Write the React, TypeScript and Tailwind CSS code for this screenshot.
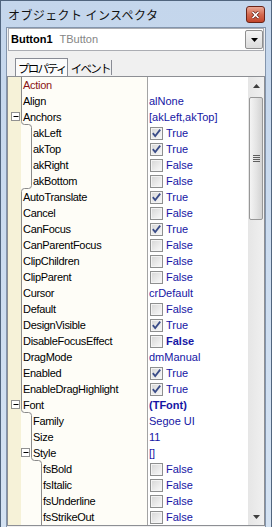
import React from "react";

type Row = {
  name: string;
  level: number;
  value?: string;
  check?: boolean;
  bold?: boolean;
  expand?: boolean;
  link?: boolean;
};

const rows: Row[] = [
  { name: "Action", level: 0, value: "", link: true },
  { name: "Align", level: 0, value: "alNone" },
  { name: "Anchors", level: 0, value: "[akLeft,akTop]", expand: true },
  { name: "akLeft", level: 1, check: true },
  { name: "akTop", level: 1, check: true },
  { name: "akRight", level: 1, check: false },
  { name: "akBottom", level: 1, check: false },
  { name: "AutoTranslate", level: 0, check: true },
  { name: "Cancel", level: 0, check: false },
  { name: "CanFocus", level: 0, check: true },
  { name: "CanParentFocus", level: 0, check: false },
  { name: "ClipChildren", level: 0, check: false },
  { name: "ClipParent", level: 0, check: false },
  { name: "Cursor", level: 0, value: "crDefault" },
  { name: "Default", level: 0, check: false },
  { name: "DesignVisible", level: 0, check: true },
  { name: "DisableFocusEffect", level: 0, check: false, bold: true },
  { name: "DragMode", level: 0, value: "dmManual" },
  { name: "Enabled", level: 0, check: true },
  { name: "EnableDragHighlight", level: 0, check: true },
  { name: "Font", level: 0, value: "(TFont)", bold: true, expand: true },
  { name: "Family", level: 1, value: "Segoe UI" },
  { name: "Size", level: 1, value: "11" },
  { name: "Style", level: 1, value: "[]", expand: true },
  { name: "fsBold", level: 2, check: false },
  { name: "fsItalic", level: 2, check: false },
  { name: "fsUnderline", level: 2, check: false },
  { name: "fsStrikeOut", level: 2, check: false },
];

const ROW_H = 16;
const lineX = (l: number) => 13.5 + l * 10;

// one path for the whole tree guide, stepping right/left where the level changes
const treePath = () => {
  let d = `M${lineX(rows[0].level)} 0`;
  rows.forEach((r, i) => {
    const next = rows[i + 1];
    if (next && next.level !== r.level) {
      const y = (i + 1) * ROW_H - 0.5;
      const a = lineX(r.level);
      const b = lineX(next.level);
      const s = b > a ? 1 : -1;
      d += ` V${y - 3} Q${a} ${y} ${a + s * 3} ${y} H${b - s * 3} Q${b} ${y} ${b} ${y + 3}`;
    }
  });
  return d + ` V${rows.length * ROW_H}`;
};

const CheckBox = ({ checked }: { checked: boolean }) => (
  <svg width="13" height="13" viewBox="0 0 13 13" className="shrink-0">
    <defs>
      <linearGradient id="cbfill" x1="0" y1="0" x2="1" y2="1">
        <stop offset="0" stopColor="#d9d9d9" />
        <stop offset="1" stopColor="#f7f7f7" />
      </linearGradient>
    </defs>
    <rect x="0.5" y="0.5" width="12" height="12" fill="#f4f4f4" stroke="#8e8f8f" />
    <rect x="2" y="2" width="9" height="9" fill="url(#cbfill)" />
    {checked && (
      <path d="M2.8 6.2 L5.2 9 L10.2 2.6" fill="none" stroke="#3a4c88" strokeWidth="1.8" />
    )}
  </svg>
);

const CloseButton = () => (
  <div className="mt-[5px] w-[19px] h-[17px] rounded-[3px] border border-[#6b2418] bg-gradient-to-b from-[#e9a896] via-[#d46a50] to-[#c3452b] flex items-center justify-center">
    <svg width="9" height="8" viewBox="0 0 9 8">
      <path d="M1.5 1 L7.5 7 M7.5 1 L1.5 7" stroke="#5a1a10" strokeWidth="3" />
      <path d="M1.5 1 L7.5 7 M7.5 1 L1.5 7" stroke="#ffffff" strokeWidth="1.6" />
    </svg>
  </div>
);

const Arrow = ({ up }: { up: boolean }) => (
  <svg width="7" height="4" viewBox="0 0 7 4">
    <path d={up ? "M0 4 L3.5 0 L7 4 Z" : "M0 0 L3.5 4 L7 0 Z"} fill="#3f3f3f" />
  </svg>
);

const App = () => {
  return (
    <div className="w-[272px] h-[527px] overflow-hidden flex flex-col border border-b-0 border-[#51657e] bg-gradient-to-b from-[#c4d6ec] to-[#d4e2f2] font-['Liberation_Sans',Arial,sans-serif]">
      {/* title bar */}
      <div className="h-[26px] shrink-0 flex items-start justify-between pl-[7px] pr-[6px]">
        <span className="mt-[6px] text-[12px] leading-[16px] tracking-[0.4px] text-[#111] font-['Noto_Sans_CJK_JP',sans-serif]">
          オブジェクト インスペクタ
        </span>
        <CloseButton />
      </div>

      <div className="flex-1 mx-[5px] border border-b-0 border-[#8395ad] bg-[#f0f0f0] flex flex-col">
        {/* component combo */}
        <div className="mx-[1px] h-[23px] shrink-0 border border-[#abadb3] bg-white flex items-center">
          <span className="pl-[2px] text-[11px] font-bold text-black">Button1</span>
          <span className="pl-[7px] text-[11px] text-[#858585]">TButton</span>
          <div className="ml-auto w-[18px] h-[19px] rounded-[2px] border border-[#8f8f8f] bg-gradient-to-b from-[#f4f4f4] to-[#dcdcdc] flex items-center justify-center">
            <svg width="7" height="4" viewBox="0 0 7 4">
              <path d="M0 0 L3.5 4 L7 0 Z" fill="#000" />
            </svg>
          </div>
        </div>

        {/* tabs */}
        <div className="h-[25px] shrink-0 flex items-end pl-[8px] font-['Noto_Sans_CJK_JP',sans-serif] text-[11.5px] tracking-[-1.8px] text-black">
          <div className="h-[18px] pl-[2px] pr-[1px] border border-b-0 border-[#898c95] bg-[#fbfbfb] flex items-center">
            <span className="leading-[14px]">プロパティ</span>
          </div>
          <div className="h-[15px] flex items-center pl-[3px] pr-[1px] border-r border-[#898c95] mb-[1px]">
            <span className="leading-[14px]">イベント</span>
          </div>
        </div>

        {/* property grid */}
        <div className="flex border border-[#8d8f94] bg-white">
          <div className="relative flex-1 flex flex-col">
            {rows.map((r) => (
              <div key={r.name} className="h-[16px] flex text-[11px] leading-[16px]">
                <div className="w-[140px] shrink-0 flex border-r border-[#a3a3a3] bg-[#fefdf7]">
                  <div className="w-[13px] shrink-0 bg-[#f6f2d8]" />
                  <span
                    className={`whitespace-nowrap tracking-[-0.3px] ${r.link ? "text-[#8a1414]" : "text-black"}`}
                    style={{ paddingLeft: 2 + r.level * 10 }}
                  >
                    {r.name}
                  </span>
                </div>
                <div
                  className={`flex-1 flex items-center whitespace-nowrap text-[#1616a4] ${
                    r.bold ? "font-bold" : ""
                  }`}
                >
                  {r.check !== undefined ? (
                    <div className="flex items-center gap-[3px] pl-[2px]">
                      <CheckBox checked={r.check} />
                      <span>{r.check ? "True" : "False"}</span>
                    </div>
                  ) : (
                    <span className="pl-[1px]">{r.value}</span>
                  )}
                </div>
              </div>
            ))}
            <svg
              className="absolute left-0 top-0 pointer-events-none"
              width="50"
              height={rows.length * ROW_H}
            >
              <path d={treePath()} fill="none" stroke="#8a8a8a" />
              {rows.map((r, i) =>
                r.expand ? (
                  <g key={r.name}>
                    <rect
                      x={lineX(r.level) - 10}
                      y={i * ROW_H + 3.5}
                      width="8"
                      height="8"
                      fill="#ffffff"
                      stroke="#919191"
                    />
                    <path
                      d={`M${lineX(r.level) - 8} ${i * ROW_H + 7.5} H${lineX(r.level) - 3}`}
                      stroke="#000"
                    />
                  </g>
                ) : null
              )}
            </svg>
          </div>

          {/* scrollbar */}
          <div className="w-[16px] shrink-0 flex flex-col bg-gradient-to-r from-[#e6e6e6] to-[#f0f0f0]">
            <div className="h-[17px] flex items-center justify-center">
              <Arrow up />
            </div>
            <div className="mt-[3px] mx-[1px] h-[123px] rounded-[2px] border border-[#979797] bg-gradient-to-r from-[#f4f4f4] via-[#e5e5e5] to-[#d3d3d3] flex items-center justify-center">
              <div className="flex flex-col gap-[1px]">
                <div className="w-[7px] h-[1px] bg-[#5f5f5f]" />
                <div className="w-[7px] h-[1px] bg-[#5f5f5f]" />
                <div className="w-[7px] h-[1px] bg-[#5f5f5f]" />
                <div className="w-[7px] h-[1px] bg-[#5f5f5f]" />
              </div>
            </div>
            <div className="flex-1" />
            <div className="h-[17px] flex items-center justify-center">
              <Arrow up={false} />
            </div>
          </div>
        </div>
      </div>
    </div>
  );
};

export default App;
